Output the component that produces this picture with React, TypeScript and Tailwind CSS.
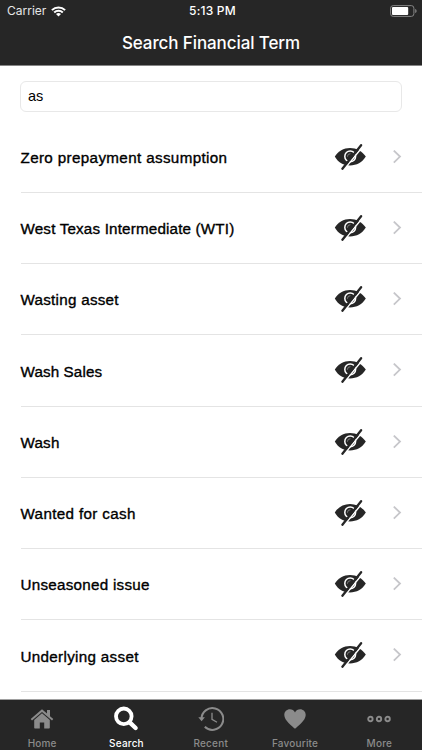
import React from "react";

const terms = [
  { name: "Zero prepayment assumption", tracking: "tracking-[0.36px]" },
  { name: "West Texas Intermediate (WTI)", tracking: "tracking-[0.18px]" },
  { name: "Wasting asset", tracking: "tracking-[0.27px]" },
  { name: "Wash Sales", tracking: "tracking-[0.12px]" },
  { name: "Wash", tracking: "tracking-[0.2px]" },
  { name: "Wanted for cash", tracking: "tracking-[0.35px]" },
  { name: "Unseasoned issue", tracking: "tracking-[0.27px]" },
  { name: "Underlying asset", tracking: "tracking-[0.32px]" },
];

function WifiIcon() {
  return (
    <svg width="15" height="11" viewBox="0 0 15 11" fill="none" stroke="#fff" strokeWidth="2">
      <path d="M0.9 4.1a9.4 9.4 0 0 1 13.2 0" />
      <path d="M3.2 6.5a6.1 6.1 0 0 1 8.6 0" />
      <path d="M7.5 10.6 5 8.1a3.6 3.6 0 0 1 5 0Z" fill="#fff" stroke="none" />
    </svg>
  );
}

function BatteryIcon() {
  return (
    <svg width="28" height="12" viewBox="0 0 28 12">
      <rect x="0.6" y="0.6" width="23.3" height="10.8" rx="2.6" fill="none" stroke="#858585" strokeWidth="1" />
      <rect x="2" y="2" width="16.2" height="8" rx="1" fill="#fff" />
      <path d="M25.2 4v4c.9-.3 1.4-1.1 1.4-2s-.5-1.7-1.4-2Z" fill="#858585" />
    </svg>
  );
}

function EyeOffIcon() {
  return (
    <svg width="32" height="26" viewBox="0 0 32 26">
      <path d="M0.8 12.6C4 7 9.7 3.9 16 3.9S28.200 7 31.800 12.600C28.200 18.500 22.500 21.500 16 21.500S4 18.500 0.800 12.600Z" fill="#262626" />
      <circle cx="16.200" cy="12.400" r="5.400" fill="none" stroke="#fff" strokeWidth="1.500" />
      <path d="M16.400 9.700a3 3 0 0 0-3 3" fill="none" stroke="#909090" strokeWidth="0.800" />
      <path d="M9.500 26 28.900 2.500" stroke="#fff" strokeWidth="1.500" />
      <path d="M8.400 24.700 27.100 1.200" stroke="#262626" strokeWidth="2.300" strokeLinecap="round" />
    </svg>
  );
}

function HomeIcon() {
  return (
    <svg width="24" height="20" viewBox="0 0 24 20" fill="#8b8b8b">
      <path d="M12 .3.7 10.1l1.300 1.400L12 2.900l10 8.600 1.300-1.400-3.300-2.900V.9h-3v3.700Z" />
      <path d="M12 4.200 4.200 10.900v7.700c0 .6.400 1 1 1h4.600v-6h4.400v6h4.600c.6 0 1-.4 1-1v-7.700Z" />
    </svg>
  );
}

function SearchIcon() {
  return (
    <svg width="26" height="26" viewBox="0 0 26 26" fill="none" stroke="#fff">
      <circle cx="10.8" cy="10.3" r="7.8" strokeWidth="3.8" />
      <path d="m16.7 16.300 5.900 5.700" strokeWidth="4.400" strokeLinecap="round" />
    </svg>
  );
}

function RecentIcon() {
  return (
    <svg width="26" height="26" viewBox="0 0 26 26" fill="none" stroke="#8b8b8b">
      <path d="M3.5 13a10.900 10.900 0 1 1 3.300 7.800" strokeWidth="2" />
      <path d="M14 6.800v6.600l5 2.900" strokeWidth="1.300" />
      <path d="M.3 11.200h6.600l-3.300 4Z" fill="#8b8b8b" stroke="none" />
    </svg>
  );
}

function HeartIcon() {
  return (
    <svg width="22" height="20" viewBox="0 0 22 20" fill="#8b8b8b">
      <path d="M11 19.800C8.200 16.700.3 11.600.3 5.900.3 2.600 2.800.3 5.900.3c2.100 0 4.100 1.200 5.100 3.100C12 1.500 14 .3 16.100.3c3.100 0 5.600 2.300 5.600 5.600 0 5.700-7.900 10.800-10.700 13.900Z" />
    </svg>
  );
}

function MoreIcon() {
  return (
    <svg width="24" height="8" viewBox="0 0 24 8" fill="none" stroke="#8b8b8b" strokeWidth="1.900">
      <circle cx="3.400" cy="4" r="2.200" />
      <circle cx="12" cy="4" r="2.200" />
      <circle cx="20.600" cy="4" r="2.200" />
    </svg>
  );
}

const tabs = [
  { label: "Home", icon: <HomeIcon /> },
  { label: "Search", icon: <SearchIcon />, active: true },
  { label: "Recent", icon: <RecentIcon /> },
  { label: "Favourite", icon: <HeartIcon /> },
  { label: "More", icon: <MoreIcon /> },
];

export default function App() {
  return (
    <div className="flex h-[750px] w-[422px] flex-col overflow-hidden bg-white font-['Inter',sans-serif]">
      <header className="h-[66px] shrink-0 border-b border-[#858585] bg-[#262626] text-white">
        <div className="grid h-[22px] grid-cols-3 items-center pl-[7px] pr-[4px] text-[12px] leading-[22px]">
          <div className="flex items-center gap-[5px]">
            <span className="text-[#e6e6e6]">Carrier</span>
            <WifiIcon />
          </div>
          <div className="text-center font-medium tracking-[0.2px]">5:13 PM</div>
          <div className="flex justify-end"><BatteryIcon /></div>
        </div>
        <h1 className="text-center text-[17px] font-medium leading-[43px] tracking-[-0.1px]">Search Financial Term</h1>
      </header>

      <main className="flex min-h-0 flex-1 flex-col overflow-hidden font-['Liberation_Sans',sans-serif] text-black">
        <div className="pb-[10px] pl-[20px] pr-[20.5px] pt-[14.5px]">
          <div className="flex h-[31px] items-center rounded-[6px] border border-[#e8e8e8] px-[7px] pt-[2px] text-[14.5px]">as</div>
        </div>
        <ul className="shrink-0">
          {terms.map(({ name, tracking }) => (
            <li key={name} className="ml-[20.5px] flex h-[71.25px] items-center border-b border-[#e4e4e4] pr-[20px]">
              <span className={`flex-1 pt-[3.5px] text-[15.2px] [-webkit-text-stroke:0.35px_#000] ${tracking}`}>{name}</span>
              <EyeOffIcon />
              <svg className="ml-[26px]" width="10" height="14" viewBox="0 0 10 14" fill="none" stroke="#c6c6ca" strokeWidth="1.8">
                <path d="m1.8 .6 6.200 6-6.200 6" />
              </svg>
            </li>
          ))}
        </ul>
      </main>

      <nav className="grid h-[51px] shrink-0 grid-cols-5 border-t border-[#a0a0a0] bg-[#262626] pr-[0.5px]">
        {tabs.map((tab) => (
          <div key={tab.label} className="flex flex-col items-center">
            <div className="flex h-[37px] items-center">{tab.icon}</div>
            <span className={tab.active ? "text-[10px] font-medium leading-[12px] tracking-[0.2px] text-white" : "text-[10px] font-medium leading-[12px] tracking-[0.2px] text-[#8b8b8b]"}>
              {tab.label}
            </span>
          </div>
        ))}
      </nav>
    </div>
  );
}
